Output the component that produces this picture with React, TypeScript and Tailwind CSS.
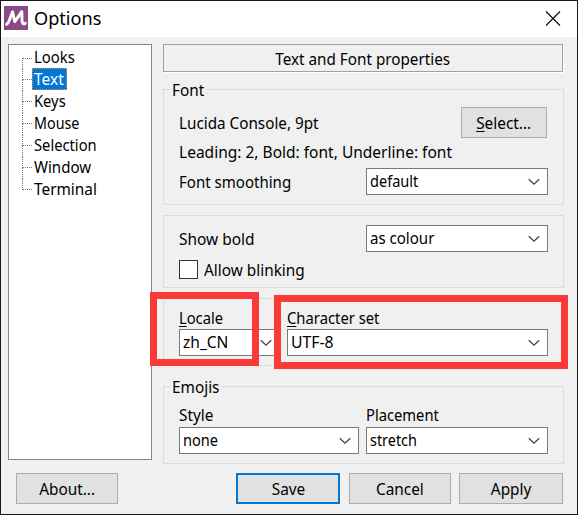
import type { ReactNode } from "react";

function T({ children, scale = "scale-x-[0.94]", origin = "origin-left" }: { children: ReactNode; scale?: string; origin?: string }) {
  return <span className={`inline-block whitespace-pre leading-5 ${scale} ${origin}`}>{children}</span>;
}

function Chevron() {
  return (
    <svg className="shrink-0" width="12" height="8" viewBox="0 0 12 8" fill="none" stroke="#444" strokeWidth="1.3">
      <path d="M0.8 1.2L6 6.2L11.2 1.2" />
    </svg>
  );
}

function Combo({ value, className, scale }: { value: string; className: string; scale?: string }) {
  return (
    <div className={`flex h-[27px] items-center justify-between border border-[#7a7a7a] bg-white pr-[7px] pl-[3px] ${className}`}>
      <div className="mb-[2px] h-5"><T scale={scale}>{value}</T></div>
      <Chevron />
    </div>
  );
}

function Button({ children, className }: { children: ReactNode; className: string }) {
  return (
    <button className={`flex h-[31px] items-center justify-center bg-[#e1e1e1] ${className}`}>
      <T origin="origin-center" scale="scale-x-[0.96]">{children}</T>
    </button>
  );
}

function Group({ title, className, children }: { title?: string; className: string; children: ReactNode }) {
  return (
    <section className={`relative w-[401px] border border-[#dcdcdc] pl-[15px] ${className}`}>
      {title && (
        <h2 className="absolute -top-[10px] left-[6px] flex bg-[#f0f0f0] pl-[2px]">
          <T scale="scale-x-[0.96]">{title}</T>
        </h2>
      )}
      {children}
    </section>
  );
}

const pages = [
  { name: "Looks", scale: "scale-x-[0.93]" },
  { name: "Text", scale: "scale-x-[0.97]" },
  { name: "Keys", scale: "scale-x-[0.92]" },
  { name: "Mouse", scale: "scale-x-[0.895]" },
  { name: "Selection", scale: "scale-x-[0.92]" },
  { name: "Window", scale: "scale-x-[0.94]" },
  { name: "Terminal", scale: "scale-x-[0.96]" },
];

export default function App() {
  return (
    <div className="relative flex h-[515px] w-[578px] flex-col overflow-hidden border border-[#1b1719] bg-[#f0f0f0] font-['Noto_Sans',sans-serif] text-[16px] leading-5 text-black">
      <header className="flex h-9 shrink-0 items-start justify-between bg-white pr-4 pl-[3px]">
        <div className="flex pt-[5px]">
          <svg width="24" height="24" viewBox="0 0 24 24">
            <rect width="24" height="24" fill="#8b4a86" />
            <path d="M2.6 18.2C4.6 17.8 6.6 11 8.3 6.2" fill="none" stroke="#fff" strokeWidth="3" strokeLinecap="round" />
            <path d="M8.6 6L10.8 15.6L17.6 5.8" fill="none" stroke="#fff" strokeWidth="2.9" strokeLinecap="round" strokeLinejoin="round" />
            <path d="M17.8 6L18 14.6C18.2 17.6 19.6 18.6 21.2 17.4" fill="none" stroke="#fff" strokeWidth="3" strokeLinecap="round" />
          </svg>
          <h1 className="-mt-px ml-[6px] origin-left scale-x-[0.98] text-[18.5px] leading-[25px]">Options</h1>
        </div>
        <svg className="mt-[10px]" width="16" height="15" viewBox="0 0 16 15" stroke="#111" strokeWidth="1.2">
          <path d="M1 0.5L15 14.5M15 0.5L1 14.5" />
        </svg>
      </header>

      <div className="flex h-[428px] shrink-0 pt-[7px] pl-[7px]">
        <nav className="h-[416px] w-[144px] border border-[#828790] bg-white pt-[2px] pl-[13px]">
          {pages.map(({ name, scale }, i) => (
            <div key={name} className="flex h-[22px]">
              <div className={`w-[10px] ${i === 0 ? "pt-[11px]" : ""}`}>
                <div className={`h-[11px] border-l border-dotted border-[#777] ${i === 0 ? "border-t" : "border-b"}`} />
                {i > 0 && i < pages.length - 1 && <div className="h-[11px] border-l border-dotted border-[#777]" />}
              </div>
              {name === "Text" ? (
                <div className="-mt-px flex h-[22px] w-[35px] items-center border border-dotted border-[#ff8728] bg-[#0078d7] pl-px text-white">
                  <T scale={scale}>{name}</T>
                </div>
              ) : (
                <div className="pl-[2px]"><T scale={scale}>{name}</T></div>
              )}
            </div>
          ))}
        </nav>

        <main className="ml-[11px]">
          <div className="flex h-7 w-[400px] items-center justify-center border border-[#a0a0a0] pt-px shadow-[1px_1px_0_#fff]">
            <T origin="origin-center" scale="scale-x-[0.953]">Text and Font properties</T>
          </div>

          <Group title="Font" className="mt-[17px] h-[116px] pt-[17px]">
            <div className="flex h-[31px] w-[368px] justify-between">
              <div className="pt-[6px]"><T scale="scale-x-[0.953]">Lucida Console, 9pt</T></div>
              <Button className="w-[86px] border border-[#adadad]"><u className="underline-offset-2">S</u>elect...</Button>
            </div>
            <div className="mt-[4px] h-5"><T scale="scale-x-[0.97]">Leading: 2, Bold: font, Underline: font</T></div>
            <div className="mt-[6px] flex w-[369px] justify-between">
              <div className="pt-[4px]"><T>Font smoothing</T></div>
              <Combo value="default" scale="scale-x-[0.91]" className="w-[182px]" />
            </div>
          </Group>

          <Group className="mt-[10px] h-[73px] pt-[9px]">
            <div className="flex w-[369px] justify-between">
              <div className="pt-[4px]"><T scale="scale-x-[0.965]">Show bold</T></div>
              <Combo value="as colour" className="w-[182px]" />
            </div>
            <label className="mt-[8px] flex h-[19px] items-center gap-[6px]">
              <span className="size-[19px] border border-[#333] bg-white" />
              <T scale="scale-x-[0.96]">Allow blinking</T>
            </label>
          </Group>

          <Group className="mt-[10px] flex h-[68px] gap-[12px] pt-[9px]">
            <div>
              <div className="h-[21px]"><T scale="scale-x-[0.92]"><u className="underline-offset-2">L</u>ocale</T></div>
              <Combo value="zh_CN" scale="scale-x-[0.97]" className="w-[96px] pr-[2px]!" />
            </div>
            <div>
              <div className="h-[21px]"><T scale="scale-x-[0.925]"><u className="underline-offset-2">C</u>haracter set</T></div>
              <Combo value="UTF-8" scale="scale-x-[0.985]" className="w-[261px]" />
            </div>
          </Group>

          <Group title="Emojis" className="mt-[20px] flex h-[78px] gap-[7px] pt-[18px]">
            <div>
              <div className="h-[22px]"><T scale="scale-x-[0.96]">Style</T></div>
              <Combo value="none" scale="scale-x-[0.91]" className="w-[180px]" />
            </div>
            <div>
              <div className="h-[22px]"><T scale="scale-x-[0.92]">Placement</T></div>
              <Combo value="stretch" scale="scale-x-[0.9]" className="w-[182px]" />
            </div>
          </Group>
        </main>
      </div>

      <footer className="flex pt-[8px] pl-[15px]">
        <Button className="w-[102px] border border-[#adadad]">About...</Button>
        <Button className="ml-[118px] w-[104px] border-2 border-[#0078d7]">Save</Button>
        <Button className="ml-[9px] w-[102px] border border-[#adadad]">Cancel</Button>
        <Button className="ml-[8px] w-[104px] border border-[#adadad]">Apply</Button>
      </footer>

      <div className="pointer-events-none absolute top-[291px] left-[149px] h-[74px] w-[109px] border-7 border-[#fc3838]" />
      <div className="pointer-events-none absolute top-[294px] left-[273px] h-[74px] w-[294px] border-7 border-[#fc3838]" />
    </div>
  );
}
